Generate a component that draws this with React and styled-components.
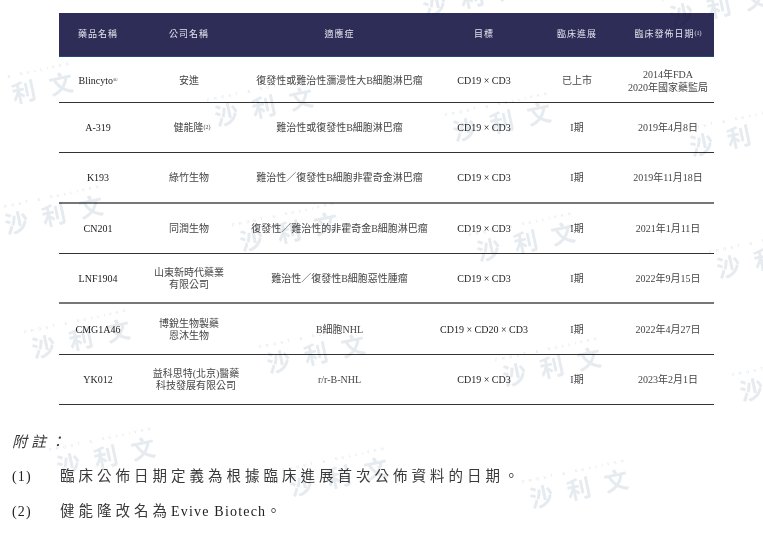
import React from 'react';
import styled, { createGlobalStyle } from 'styled-components';

const GlobalStyle = createGlobalStyle`
  html, body {
    margin: 0;
    padding: 0;
    background: #fff;
  }
  body {
    font-family: "Liberation Serif", "Noto Sans CJK TC", serif;
  }
`;

const Page = styled.div`
  position: relative;
  width: 763px;
  height: 535px;
  overflow: hidden;
  padding-top: 13px;
  box-sizing: border-box;
`;

const Table = styled.div`
  width: 655px;
  margin-left: 59px;
`;

const Row = styled.div`
  display: grid;
  grid-template-columns: 78px 104px 197px 92px 94px 1fr;
  align-items: center;
  height: ${p => (p.$first ? '46px' : '50.35px')};
  padding-right: 2px;
  padding-top: ${p => (p.$first ? '4px' : '2px')};
  box-sizing: border-box;
  border-bottom: ${p => (p.$soft ? '2px solid #77777a' : '1px solid #333')};
  color: #454545;
  font-size: 10px;
  line-height: 12.5px;
`;

const HeadRow = styled(Row)`
  height: 44px;
  padding-top: 0;
  background: #2e2d58;
  border-bottom: 1px solid #1f4a7e;
  color: #e6e4ec;
  font-size: 9px;
  letter-spacing: 1px;
`;

const Cell = styled.div`
  text-align: center;
  padding-left: ${p => p.$indent || 0}px;
`;

const Latin = styled.span`
  color: #222;
`;

const Mark = styled.sup`
  font-size: 6px;
  line-height: 0;
  letter-spacing: 0;
  vertical-align: 2px;
`;

const Notes = styled.div`
  margin-top: 19px;
  padding-left: 12px;
  font-size: 14.5px;
  line-height: 35px;
  color: #3a3a3a;
`;

const NotesTitle = styled.div`
  padding-top: 1px;
  margin-bottom: -1px;
  font-size: 15px;
  font-style: italic;
  letter-spacing: 4px;
`;

const Note = styled.div`
  display: grid;
  grid-template-columns: 48px 1fr;
`;

const NoteNum = styled.span`
  font-size: 14px;
  letter-spacing: 1.2px;
  color: #222;
`;

const NoteText = styled.span`
  letter-spacing: 4px;
`;

const NoteLatin = styled.span`
  font-size: 14px;
  letter-spacing: 1.2px;
  color: #222;
`;

const Watermark = styled.div`
  position: absolute;
  left: ${p => p.$x}px;
  top: ${p => p.$y}px;
  width: 130px;
  transform: translate(-50%, -50%) rotate(-12deg);
  text-align: center;
  pointer-events: none;
  mix-blend-mode: multiply;
`;

const WatermarkSmall = styled.div`
  font-family: "Liberation Sans", sans-serif;
  font-size: 4px;
  line-height: 6px;
  letter-spacing: 4.4px;
  white-space: nowrap;
  color: #dde0e5;
`;

const WatermarkBig = styled.div`
  display: flex;
  justify-content: center;
  gap: 14px;
  font-family: "Noto Sans CJK TC", sans-serif;
  font-size: 24px;
  font-weight: 700;
  line-height: 28px;
  color: #e6ebf0;
`;

const marks = [
  [471, -7], [718, 3], [23, 88], [263, 103], [501, 118], [738, 133],
  [53, 211], [288, 228], [525, 238], [765, 255], [80, 335], [315, 350],
  [551, 363], [788, 378], [105, 453], [338, 473], [578, 485],
];

const rows = [
  { drug: <>Blincyto<Mark>®</Mark></>, company: ['安進'], use: '復發性或難治性瀰漫性大B細胞淋巴瘤', target: 'CD19 × CD3', stage: '已上市', date: ['2014年FDA', '2020年國家藥監局'], first: true },
  { drug: 'A-319', company: [<>健能隆<Mark>(2)</Mark></>], indent: 6, use: '難治性或復發性B細胞淋巴瘤', target: 'CD19 × CD3', stage: 'I期', date: ['2019年4月8日'] },
  { drug: 'K193', company: ['綠竹生物'], use: '難治性／復發性B細胞非霍奇金淋巴瘤', target: 'CD19 × CD3', stage: 'I期', date: ['2019年11月18日'], soft: true },
  { drug: 'CN201', company: ['同潤生物'], use: '復發性／難治性的非霍奇金B細胞淋巴瘤', target: 'CD19 × CD3', stage: 'I期', date: ['2021年1月11日'] },
  { drug: 'LNF1904', company: ['山東新時代藥業', '有限公司'], use: '難治性／復發性B細胞惡性腫瘤', target: 'CD19 × CD3', stage: 'I期', date: ['2022年9月15日'], soft: true },
  { drug: 'CMG1A46', company: ['博銳生物製藥', '恩沐生物'], use: 'B細胞NHL', target: 'CD19 × CD20 × CD3', stage: 'I期', date: ['2022年4月27日'] },
  { drug: 'YK012', company: ['益科思特(北京)醫藥', '科技發展有限公司'], indent: 14, use: 'r/r-B-NHL', target: 'CD19 × CD3', stage: 'I期', date: ['2023年2月1日'] },
];

const Lines = ({ items }) => items.map((line, i) => <div key={i}>{line}</div>);

export default function App() {
  return (
    <Page>
      <GlobalStyle />
      <Table>
        <HeadRow>
          <Cell>藥品名稱</Cell>
          <Cell>公司名稱</Cell>
          <Cell>適應症</Cell>
          <Cell>目標</Cell>
          <Cell>臨床進展</Cell>
          <Cell>臨床發佈日期<Mark>(1)</Mark></Cell>
        </HeadRow>
        {rows.map((r, i) => (
          <Row key={i} $soft={r.soft} $first={r.first}>
            <Cell><Latin>{r.drug}</Latin></Cell>
            <Cell $indent={r.indent}><Lines items={r.company} /></Cell>
            <Cell>{r.use}</Cell>
            <Cell><Latin>{r.target}</Latin></Cell>
            <Cell>{r.stage}</Cell>
            <Cell><Lines items={r.date} /></Cell>
          </Row>
        ))}
      </Table>
      <Notes>
        <NotesTitle>附註：</NotesTitle>
        <Note>
          <NoteNum>(1)</NoteNum>
          <NoteText>臨床公佈日期定義為根據臨床進展首次公佈資料的日期。</NoteText>
        </Note>
        <Note>
          <NoteNum>(2)</NoteNum>
          <NoteText>健能隆改名為<NoteLatin>Evive Biotech</NoteLatin>。</NoteText>
        </Note>
      </Notes>
      {marks.map(([x, y]) => (
        <Watermark key={`${x}-${y}`} $x={x} $y={y}>
          <WatermarkSmall>FROST &amp; SULLIVAN</WatermarkSmall>
          <WatermarkBig><span>沙</span><span>利</span><span>文</span></WatermarkBig>
        </Watermark>
      ))}
    </Page>
  );
}
